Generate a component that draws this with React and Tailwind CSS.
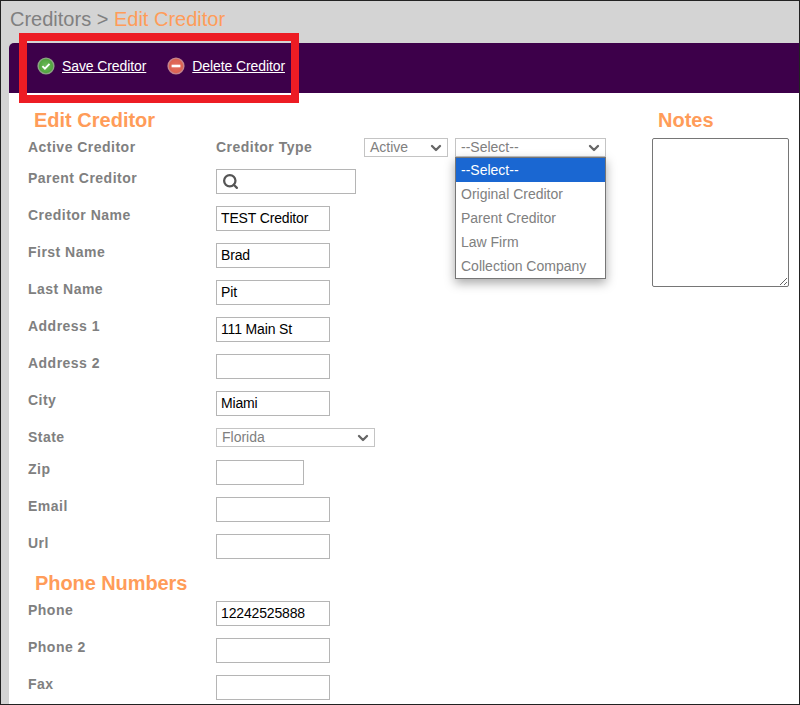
import React from 'react';
import { Search, ChevronDown } from 'lucide-react';

const labelClass = 'text-[14px] font-bold text-[#808080] tracking-[0.48px] leading-[18px]';

function Field({ label, value, className = 'w-[114px]' }) {
  return (
    <div className="flex items-start h-[37px]">
      <label className={`w-[207px] pl-[19px] ${labelClass}`}>{label}</label>
      <input
        defaultValue={value}
        className={`${className} h-[25px] border border-[#b5b5b5] bg-white pl-[4px] pb-[2px] text-[14px] tracking-[-0.15px] text-black outline-none`}
      />
    </div>
  );
}

function Select({ value, className }) {
  return (
    <div className={`flex items-center justify-between border border-[#c4c4c4] bg-white pl-[5px] pr-[3px] text-[14px] text-[#808080] ${className}`}>
      <span>{value}</span>
      <ChevronDown className="w-[16px] h-[16px] text-[#666]" strokeWidth={3.5} />
    </div>
  );
}

function RoundIcon({ id, from, to, ring, children }) {
  return (
    <svg width="18" height="18" viewBox="0 0 18 18" className="shrink-0">
      <defs>
        <radialGradient id={id} cx="50%" cy="50%" r="55%">
          <stop offset="0%" stopColor={from} />
          <stop offset="100%" stopColor={to} />
        </radialGradient>
      </defs>
      <circle cx="9" cy="9" r="8.6" fill={ring} opacity="0.75" />
      <circle cx="9" cy="9" r="7.2" fill={`url(#${id})`} />
      {children}
    </svg>
  );
}

export default function App() {
  return (
    <div className="w-[800px] h-[705px] overflow-hidden bg-[#d4d4d4] border border-[#222] relative font-['Liberation_Sans',Arial,sans-serif]">
      <div className="h-[42px] pl-[9px] pt-[4px] text-[20px] leading-[28px] text-[#808080]">
        Creditors &gt; <span className="text-[#ff9c59]">Edit Creditor</span>
      </div>

      <div className="ml-[8px] h-[50px] bg-[#3d004a] rounded-tl-[5px] flex items-center pl-[28px] pb-[4px] text-[14px] text-white">
        <a className="flex items-center mr-[21px]">
          <RoundIcon id="saveIcon" from="#6fbd5c" to="#4c9f3a" ring="#a8d89a">
            <path d="M5.4 9.2l2.5 2.5 4.6-4.8" fill="none" stroke="#fff" strokeWidth="1.9" />
          </RoundIcon>
          <span className="ml-[7px] underline tracking-[-0.1px]">Save Creditor</span>
        </a>
        <a className="flex items-center">
          <RoundIcon id="deleteIcon" from="#e57060" to="#d9604f" ring="#f2b0a4">
            <rect x="4.6" y="7.7" width="8.8" height="2.6" fill="#fff" />
          </RoundIcon>
          <span className="ml-[7px] underline tracking-[-0.1px]">Delete Creditor</span>
        </a>
      </div>

      <div className="ml-[8px] bg-white h-[611px] flex">
        <div className="w-[635px]">
          <h2 className="pl-[25px] h-[32px] pt-[15px] text-[20px] leading-[24px] font-bold text-[#ff9c59]">Edit Creditor</h2>

          <div className="mt-[13px] flex items-start h-[31px]">
            <label className={`w-[207px] pl-[19px] ${labelClass}`}>Active Creditor</label>
            <label className={`w-[148px] ${labelClass}`}>Creditor Type</label>
            <Select value="Active" className="w-[84px] h-[19px] mr-[7px]" />
            <div className="relative">
              <Select value="--Select--" className="w-[151px] h-[19px]" />
              <ul className="absolute left-0 top-[19px] z-10 w-[151px] border border-[#767676] bg-white text-[14px] leading-[24px] text-[#808080] shadow-[0_4px_10px_rgba(0,0,0,0.35)]">
                <li className="bg-[#1a67d2] text-white pl-[5px]">--Select--</li>
                <li className="pl-[5px]">Original Creditor</li>
                <li className="pl-[5px]">Parent Creditor</li>
                <li className="pl-[5px]">Law Firm</li>
                <li className="pl-[5px]">Collection Company</li>
              </ul>
            </div>
          </div>

          <div className="flex items-start h-[37px]">
            <label className={`w-[207px] pl-[19px] ${labelClass}`}>Parent Creditor</label>
            <div className="w-[140px] h-[25px] border border-[#b5b5b5] flex items-center pl-[5px]">
              <Search className="w-[17px] h-[17px] text-[#555]" strokeWidth={3.2} />
            </div>
          </div>

          <Field label="Creditor Name" value="TEST Creditor" />
          <Field label="First Name" value="Brad" />
          <Field label="Last Name" value="Pit" />
          <Field label="Address 1" value="111 Main St" />
          <Field label="Address 2" value="" />
          <Field label="City" value="Miami" />

          <div className="flex items-start h-[32px]">
            <label className={`w-[207px] pl-[19px] ${labelClass}`}>State</label>
            <Select value="Florida" className="w-[159px] h-[19px]" />
          </div>

          <Field label="Zip" value="" className="w-[88px]" />
          <Field label="Email" value="" />
          <Field label="Url" value="" />

          <h2 className="pl-[26px] h-[30px] text-[20px] leading-[24px] tracking-[-0.08px] font-bold text-[#ff9c59]">Phone Numbers</h2>
          <Field label="Phone" value="12242525888" />
          <Field label="Phone 2" value="" />
          <Field label="Fax" value="" />
        </div>

        <div className="pl-[8px]">
          <h2 className="pl-[6px] pt-[15px] text-[20px] leading-[24px] font-bold text-[#ff9c59]">Notes</h2>
          <textarea className="mt-[6px] block w-[137px] h-[149px] border border-[#767676] rounded-[2px] bg-white outline-none" />
        </div>
      </div>

      <div className="absolute left-[18px] top-[32px] w-[280px] h-[70px] border-[8px] border-[#ed1c24]" />
    </div>
  );
}
